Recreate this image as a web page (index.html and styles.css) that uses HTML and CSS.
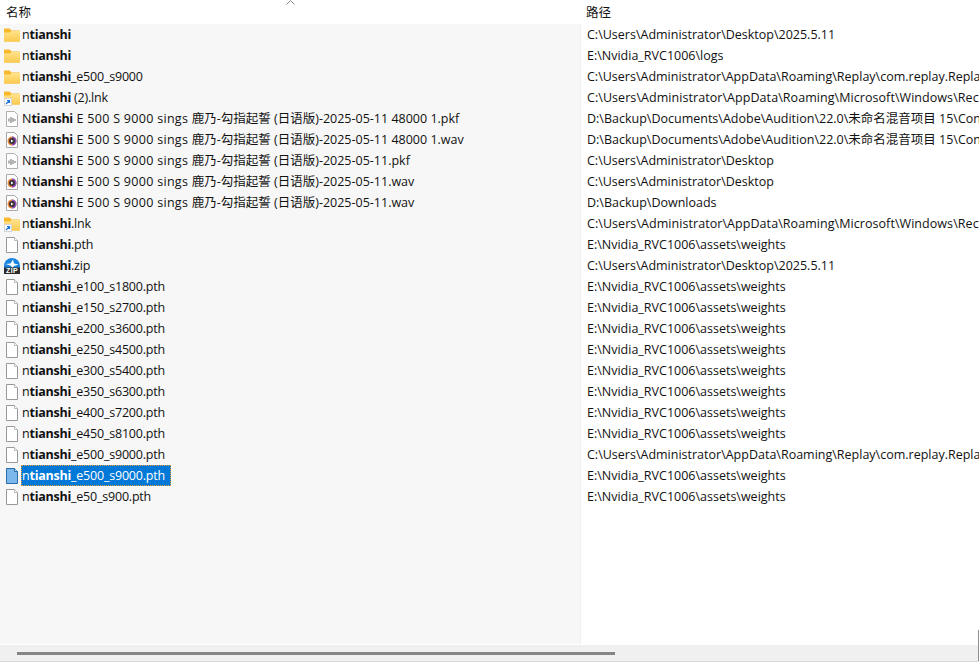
FILE: index.html
```html
<!DOCTYPE html>
<html lang="zh">
<head>
<meta charset="utf-8">
<title>Everything</title>
<link rel="stylesheet" href="styles.css">
</head>
<body>
<svg class="defs" width="0" height="0" aria-hidden="true">
  <defs>
    <linearGradient id="fg" x1="0" y1="0" x2="0" y2="1"><stop offset="0" stop-color="#ffe38a"/><stop offset="1" stop-color="#fbc94f"/></linearGradient>
    <symbol id="folder" viewBox="0 0 16 16">
      <path d="M0 2.500C0 1.900.4 1.500 1 1.500h4.500L7.500 3.500H15c.6 0 1 .4 1 1V13.500c0 .6-.4 1-1 1H1c-.6 0-1-.4-1-1z" fill="#f8b82c"/>
      <path d="M0 5.500h6l1.500-1.500H16V13.500c0 .6-.4 1-1 1H1c-.6 0-1-.4-1-1z" fill="url(#fg)"/>
    </symbol>
    <symbol id="shortcut" viewBox="0 0 16 16">
      <rect x="0.500" y="8.500" width="7" height="7" fill="#fff" stroke="#d5d5d5"/>
      <path d="M2 14l3-3M3 10.500h2.500V13" fill="none" stroke="#1a74d8" stroke-width="1.200"/>
    </symbol>
    <symbol id="file" viewBox="0 0 16 16">
      <path d="M2.500.500h8l3 3v12h-11z" fill="#fff" stroke="#999"/>
      <path d="M10.500 .500v3h3" fill="#fff" stroke="#bbb"/>
    </symbol>
    <symbol id="pkf" viewBox="0 0 16 16">
      <path d="M2.500.500h8l3 3v12h-11z" fill="#fff" stroke="#b0b0b0"/>
      <path d="M5 7.500v3M7 6v6M9 7v4M11 8v2" stroke="#777" stroke-width="1.100" fill="none"/>
    </symbol>
    <symbol id="wav" viewBox="0 0 16 16">
      <path d="M2.500.500h8l3 3v12h-11z" fill="#fff" stroke="#a8a8a8"/>
      <circle cx="8" cy="9" r="4.500" fill="#e8873a"/>
      <path d="M8 4.500a4.500 4.500 0 0 1 0 9z" fill="#8a4fc0"/>
      <circle cx="8" cy="9" r="3" fill="#3a3038"/>
      <path d="M7 7.500v3l2.500-1.500z" fill="#fff"/>
    </symbol>
    <symbol id="zip" viewBox="0 0 16 16">
      <path d="M0 8a8 8 0 0 1 16 0v2H0z" fill="#1a84e0"/>
      <path d="M1.500 6l5-.5L9 1.500l1 4 4.500 1-4.500 1.500-1.500 2-2-2.500z" fill="#fff"/>
      <rect x="0" y="9.500" width="16" height="6.500" fill="#2b2b2b"/>
      <text class="ziptext" x="8" y="15">ZIP</text>
    </symbol>
    <symbol id="sel" viewBox="0 0 16 16">
      <path d="M2.500.500h8l3 3v12h-11z" fill="#7db8ec" stroke="#2a6ca8"/>
      <path d="M10.500 .500v3h3" fill="#b9d9f5" stroke="#2a6ca8"/>
    </symbol>
  </defs>
</svg>
<main class="window">
  <header class="head">
    <div class="head-name">名称</div>
    <svg class="caret" width="9" height="5" viewBox="0 0 9 5"><path d="M.500 4.500L4.500.500l4 4" fill="none" stroke="#8a8a8a"/></svg>
    <div class="head-path">路径</div>
  </header>
  <div class="table">
    <div class="names">
      <div class="row"><svg class="ico"><use href="#folder"/></svg><span class="nm">n<b>tianshi</b></span></div>
      <div class="row"><svg class="ico"><use href="#folder"/></svg><span class="nm">n<b>tianshi</b></span></div>
      <div class="row"><svg class="ico"><use href="#folder"/></svg><span class="nm">n<b>tianshi</b>_e500_s9000</span></div>
      <div class="row"><svg class="ico"><use href="#folder"/><use href="#shortcut"/></svg><span class="nm">n<b>tianshi</b> (2).lnk</span></div>
      <div class="row"><svg class="ico"><use href="#pkf"/></svg><span class="nm long">N<b>tianshi</b><span class="meta"> E 500 S 9000 sings </span>鹿乃-勾指起誓 (日语版)-2025-05-11 48000 1.pkf</span></div>
      <div class="row"><svg class="ico"><use href="#wav"/></svg><span class="nm long">N<b>tianshi</b><span class="meta"> E 500 S 9000 sings </span>鹿乃-勾指起誓 (日语版)-2025-05-11 48000 1.wav</span></div>
      <div class="row"><svg class="ico"><use href="#pkf"/></svg><span class="nm long">N<b>tianshi</b><span class="meta"> E 500 S 9000 sings </span>鹿乃-勾指起誓 (日语版)-2025-05-11.pkf</span></div>
      <div class="row"><svg class="ico"><use href="#wav"/></svg><span class="nm long">N<b>tianshi</b><span class="meta"> E 500 S 9000 sings </span>鹿乃-勾指起誓 (日语版)-2025-05-11.wav</span></div>
      <div class="row"><svg class="ico"><use href="#wav"/></svg><span class="nm long">N<b>tianshi</b><span class="meta"> E 500 S 9000 sings </span>鹿乃-勾指起誓 (日语版)-2025-05-11.wav</span></div>
      <div class="row"><svg class="ico"><use href="#folder"/><use href="#shortcut"/></svg><span class="nm">n<b>tianshi</b>.lnk</span></div>
      <div class="row"><svg class="ico"><use href="#file"/></svg><span class="nm">n<b>tianshi</b>.pth</span></div>
      <div class="row"><svg class="ico"><use href="#zip"/></svg><span class="nm">n<b>tianshi</b>.zip</span></div>
      <div class="row"><svg class="ico"><use href="#file"/></svg><span class="nm">n<b>tianshi</b>_e100_s1800.pth</span></div>
      <div class="row"><svg class="ico"><use href="#file"/></svg><span class="nm">n<b>tianshi</b>_e150_s2700.pth</span></div>
      <div class="row"><svg class="ico"><use href="#file"/></svg><span class="nm">n<b>tianshi</b>_e200_s3600.pth</span></div>
      <div class="row"><svg class="ico"><use href="#file"/></svg><span class="nm">n<b>tianshi</b>_e250_s4500.pth</span></div>
      <div class="row"><svg class="ico"><use href="#file"/></svg><span class="nm">n<b>tianshi</b>_e300_s5400.pth</span></div>
      <div class="row"><svg class="ico"><use href="#file"/></svg><span class="nm">n<b>tianshi</b>_e350_s6300.pth</span></div>
      <div class="row"><svg class="ico"><use href="#file"/></svg><span class="nm">n<b>tianshi</b>_e400_s7200.pth</span></div>
      <div class="row"><svg class="ico"><use href="#file"/></svg><span class="nm">n<b>tianshi</b>_e450_s8100.pth</span></div>
      <div class="row"><svg class="ico"><use href="#file"/></svg><span class="nm">n<b>tianshi</b>_e500_s9000.pth</span></div>
      <div class="row"><svg class="ico"><use href="#sel"/></svg><span class="nm selected">n<b>tianshi</b>_e500_s9000.pth</span></div>
      <div class="row"><svg class="ico"><use href="#file"/></svg><span class="nm">n<b>tianshi</b>_e50_s900.pth</span></div>
    </div>
    <div class="paths">
      <div class="prow">C:\Users\Administrator\Desktop\2025.5.11</div>
      <div class="prow">E:\Nvidia_RVC1006\logs</div>
      <div class="prow">C:\Users\Administrator\AppData\Roaming\Replay\com.replay.Replay\cache\models</div>
      <div class="prow wide">C:\Users\Administrator\AppData\Roaming\Microsoft\Windows\Recent</div>
      <div class="prow">D:\Backup\Documents\Adobe\Audition\22.0\未命名混音项目 15\Converted\Files</div>
      <div class="prow">D:\Backup\Documents\Adobe\Audition\22.0\未命名混音项目 15\Converted\Files</div>
      <div class="prow">C:\Users\Administrator\Desktop</div>
      <div class="prow">C:\Users\Administrator\Desktop</div>
      <div class="prow">D:\Backup\Downloads</div>
      <div class="prow wide">C:\Users\Administrator\AppData\Roaming\Microsoft\Windows\Recent</div>
      <div class="prow">E:\Nvidia_RVC1006\assets\weights</div>
      <div class="prow">C:\Users\Administrator\Desktop\2025.5.11</div>
      <div class="prow">E:\Nvidia_RVC1006\assets\weights</div>
      <div class="prow">E:\Nvidia_RVC1006\assets\weights</div>
      <div class="prow">E:\Nvidia_RVC1006\assets\weights</div>
      <div class="prow">E:\Nvidia_RVC1006\assets\weights</div>
      <div class="prow">E:\Nvidia_RVC1006\assets\weights</div>
      <div class="prow">E:\Nvidia_RVC1006\assets\weights</div>
      <div class="prow">E:\Nvidia_RVC1006\assets\weights</div>
      <div class="prow">E:\Nvidia_RVC1006\assets\weights</div>
      <div class="prow">C:\Users\Administrator\AppData\Roaming\Replay\com.replay.Replay\cache\models</div>
      <div class="prow">E:\Nvidia_RVC1006\assets\weights</div>
      <div class="prow">E:\Nvidia_RVC1006\assets\weights</div>
    </div>
  </div>
  <footer class="hscroll"><div class="thumb"></div></footer>
</main>
</body>
</html>
```

FILE: styles.css
```css
* { box-sizing: border-box; }
html, body { margin: 0; height: 100%; overflow: hidden; background: #fff; }
body { font: 12.500px/21px "Open Sans", "Noto Sans CJK SC", sans-serif; color: #111; }
.defs { display: block; height: 0; }
.ziptext { font: 700 7px "Liberation Sans", sans-serif; fill: #fff; text-anchor: middle; letter-spacing: .3px; }
.window { height: 662px; display: flex; flex-direction: column; border-bottom: 1px solid #d9d9d9; position: relative; }
.window::after { content: ""; position: absolute; right: 0; top: 630px; bottom: 0; width: 1px; background: #8f8f8f; }
.head { height: 24px; flex: none; display: flex; align-items: center; position: relative; }
.head-name { width: 586px; padding-left: 6px; }
.caret { position: absolute; left: 286px; top: 0; }
.table { flex: 1; min-height: 0; display: flex; overflow: hidden; }
.names { width: 581px; flex: none; background: #f7f7f7; border-right: 1px solid #f0f0f0; }
.paths { flex: 1; min-width: 0; padding-left: 6px; }
.row, .prow { height: 21px; white-space: nowrap; overflow: hidden; }
.wide { letter-spacing: .06px; }
.row { display: flex; align-items: center; padding-left: 4px; }
.ico { width: 16px; height: 16px; flex: none; }
.nm { margin-left: 1px; padding: 0 6px 0 1px; height: 21px; letter-spacing: -.2px; }
.nm b { font-weight: 700; letter-spacing: -.25px; }
.long { letter-spacing: 0; }
.meta { letter-spacing: .3px; }
.selected { background: #0078d7; color: #fff; outline: 1px dotted #f0a030; outline-offset: -1px; }
.hscroll { height: 16px; flex: none; background: #f0f0f0; display: flex; align-items: center; padding-left: 17px; margin-top: 1px; }
.thumb { width: 598px; height: 3px; background: #858585; margin-top: 1px; }
```
